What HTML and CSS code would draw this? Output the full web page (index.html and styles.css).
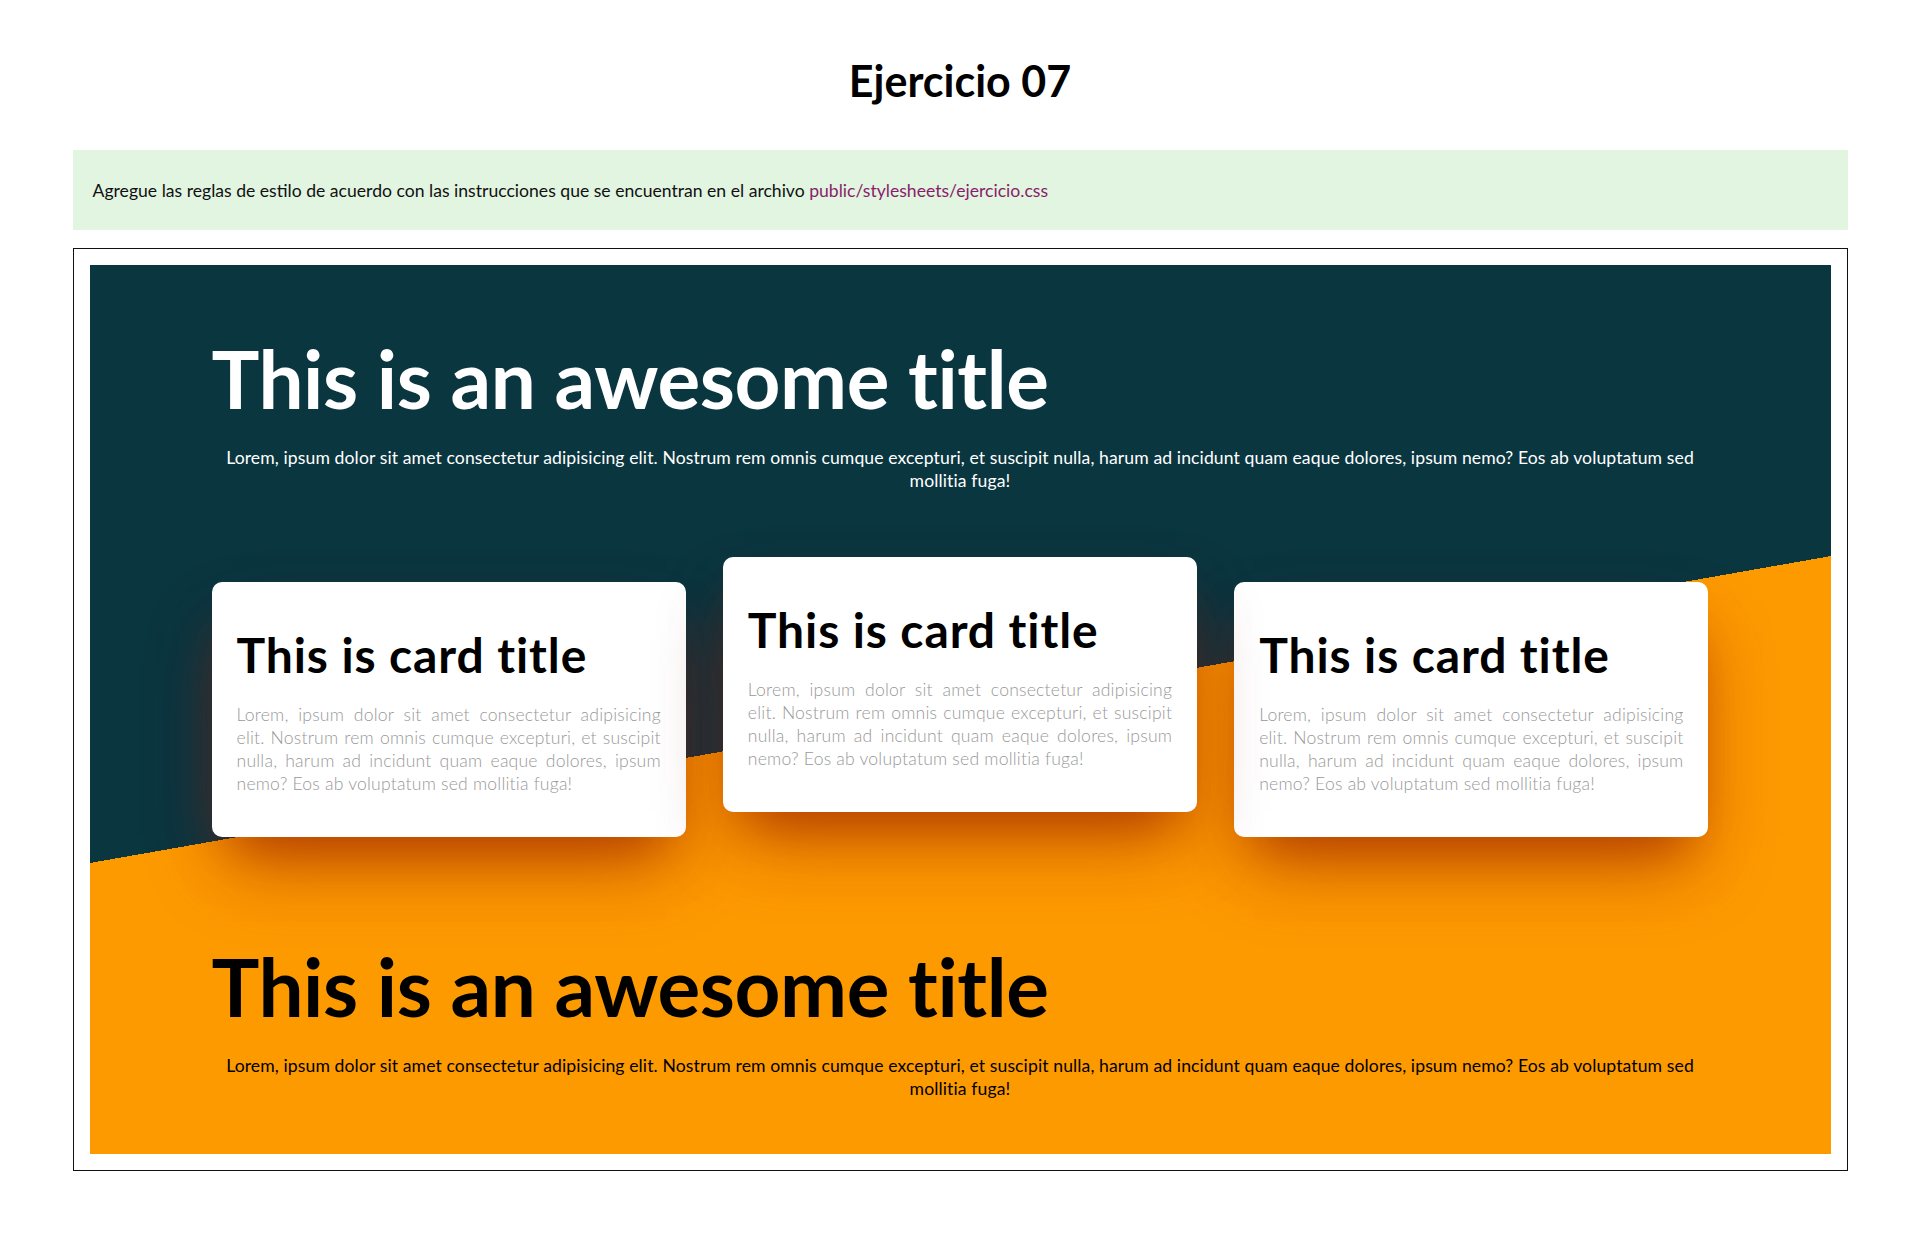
FILE: index.html
```html
<!DOCTYPE html>
<html lang="es">
<head>
<meta charset="utf-8">
<title>Ejercicio 07</title>
<link rel="stylesheet" href="styles.css">
</head>
<body>
<header class="page-header">
  <h1 class="page-title">Ejercicio 07</h1>
</header>
<main class="wrap">
  <div class="notice">
    <p class="notice-text">Agregue las reglas de estilo de acuerdo con las instrucciones que se encuentran en el archivo <span class="path">public/stylesheets/ejercicio.css</span></p>
  </div>
  <div class="frame">
    <div class="hero">
      <section class="block block-top">
        <h2 class="big-title">This is an awesome title</h2>
        <p class="lead">Lorem, ipsum dolor sit amet consectetur adipisicing elit. Nostrum rem omnis cumque excepturi, et suscipit nulla, harum ad incidunt quam eaque dolores, ipsum nemo? Eos ab voluptatum sed mollitia fuga!</p>
      </section>
      <div class="cards">
        <article class="card">
          <h3 class="card-title">This is card title</h3>
          <p class="card-text">Lorem, ipsum dolor sit amet consectetur adipisicing elit. Nostrum rem omnis cumque excepturi, et suscipit nulla, harum ad incidunt quam eaque dolores, ipsum nemo? Eos ab voluptatum sed mollitia fuga!</p>
        </article>
        <article class="card card-raised">
          <h3 class="card-title">This is card title</h3>
          <p class="card-text">Lorem, ipsum dolor sit amet consectetur adipisicing elit. Nostrum rem omnis cumque excepturi, et suscipit nulla, harum ad incidunt quam eaque dolores, ipsum nemo? Eos ab voluptatum sed mollitia fuga!</p>
        </article>
        <article class="card">
          <h3 class="card-title">This is card title</h3>
          <p class="card-text">Lorem, ipsum dolor sit amet consectetur adipisicing elit. Nostrum rem omnis cumque excepturi, et suscipit nulla, harum ad incidunt quam eaque dolores, ipsum nemo? Eos ab voluptatum sed mollitia fuga!</p>
        </article>
      </div>
      <section class="block block-bottom">
        <h2 class="big-title">This is an awesome title</h2>
        <p class="lead">Lorem, ipsum dolor sit amet consectetur adipisicing elit. Nostrum rem omnis cumque excepturi, et suscipit nulla, harum ad incidunt quam eaque dolores, ipsum nemo? Eos ab voluptatum sed mollitia fuga!</p>
      </section>
    </div>
  </div>
</main>
</body>
</html>
```
FILE: styles.css
```css
* { box-sizing: border-box; }

html, body {
  margin: 0;
  padding: 0;
  background: #fff;
}

body {
  font-family: "Lato", "Open Sans", sans-serif;
  font-size: 17.6px;
  line-height: 23px;
  color: #000;
}

.page-header {
  padding-top: 55px;
  padding-bottom: 43px;
  text-align: center;
}

.page-title {
  margin: 0;
  font-size: 43px;
  line-height: 52px;
  font-weight: 700;
}

.wrap {
  width: 1775px;
  margin: 0 auto;
}

.notice {
  background: #e1f5e1;
  padding: 29px 20px 28px;
}

.notice-text {
  margin: 0;
  color: #111;
}

.path {
  color: #8a1d6b;
}

.frame {
  margin-top: 18px;
  border: 1px solid #111;
  padding: 16px;
}

.hero {
  background: linear-gradient(170deg, #0a3640 50%, #fd9a00 50%);
  padding: 65px 122px 54px;
}

.block-top { color: #fff; }
.block-bottom { color: #000; }

.big-title {
  margin: 0;
  font-size: 80px;
  line-height: 96px;
  font-weight: 700;
  letter-spacing: -0.4px;
}

.lead {
  margin: 20px 0 0;
  text-align: center;
  line-height: 23px;
  letter-spacing: 0.1px;
}

.cards {
  display: flex;
  align-items: flex-start;
  gap: 37px;
  margin-top: 90px;
  margin-bottom: 101px;
}

.card {
  flex: 1 1 0;
  background: #fff;
  border-radius: 10px;
  padding: 44px 25px 42px;
  box-shadow: 0 30px 50px -20px rgba(150, 30, 0, 0.55), 0 40px 80px -15px rgba(150, 20, 0, 0.45);
}

.card-raised {
  transform: translateY(-25px);
}

.card-title {
  margin: 0;
  font-size: 48px;
  line-height: 57.6px;
  font-weight: 700;
  color: #000;
  letter-spacing: 0.9px;
}

.card-text {
  margin: 19px 0 0;
  color: #999;
  font-weight: 300;
  text-align: justify;
  line-height: 23px;
  letter-spacing: 0.2px;
}
```
